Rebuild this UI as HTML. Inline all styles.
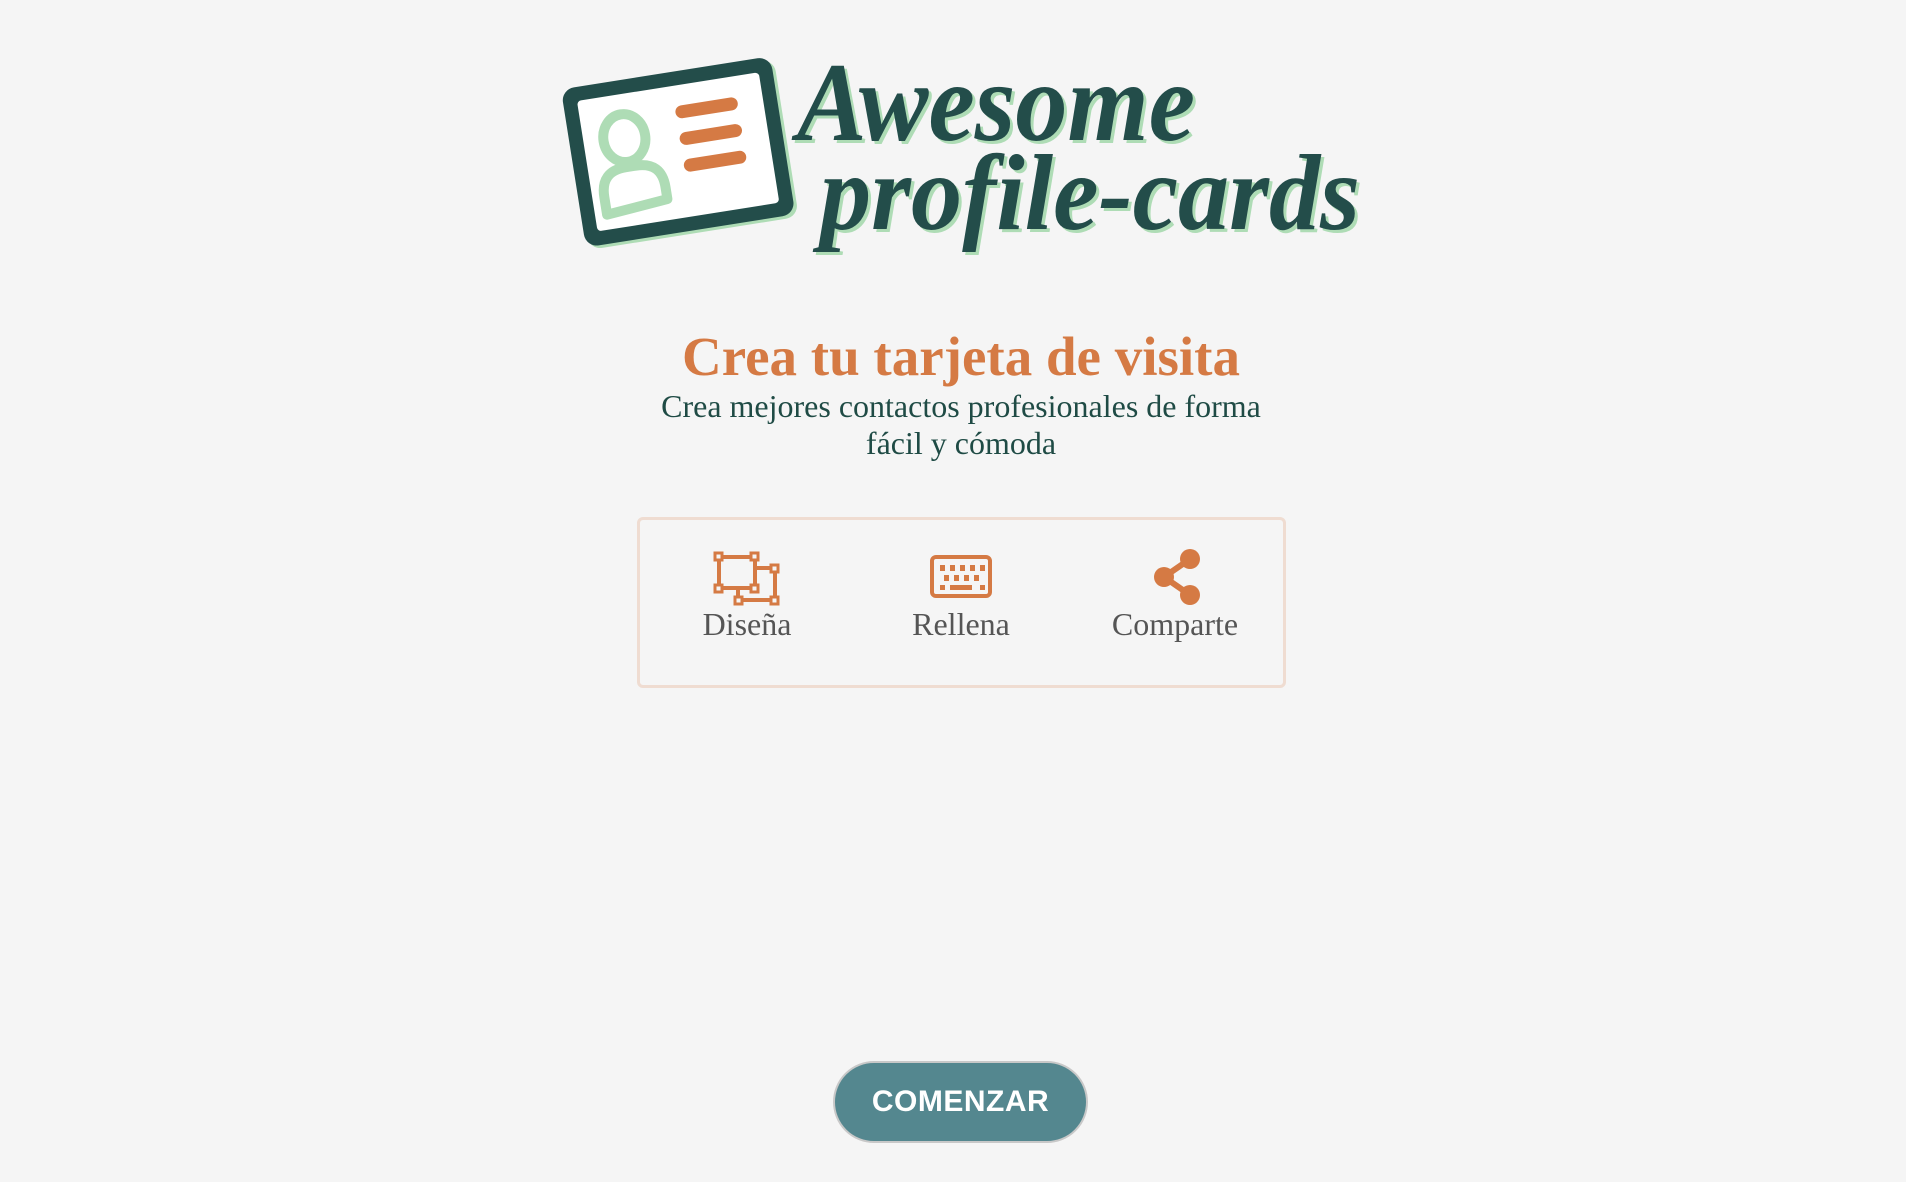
<!DOCTYPE html>
<html><head><meta charset="utf-8"><style>
html,body{margin:0;padding:0;}
body{width:1906px;height:1182px;background:#f5f5f5;position:relative;overflow:hidden;font-family:"Liberation Serif",serif;}
.abs{position:absolute;}
h1{position:absolute;left:8px;width:1906px;top:325px;margin:0;text-align:center;font:bold 55px "Liberation Serif",serif;color:#d57a44;}
.sub{position:absolute;left:8px;width:1906px;top:388px;text-align:center;font-size:32px;line-height:37px;color:#1f4b45;}
.box{position:absolute;left:637px;top:517px;width:643px;height:165px;border:3px solid #efdcd1;border-radius:6px;}
.lab{position:absolute;top:606px;width:200px;text-align:center;font-size:32px;color:#555;}
.btn{position:absolute;left:833px;top:1061px;width:251px;height:78px;border:2px solid #c8c8c8;border-radius:42px;background:#54878f;color:#fff;font:bold 30px "Liberation Sans",sans-serif;text-align:center;line-height:78px;letter-spacing:0.5px;}
</style></head><body>
<svg class="abs" style="left:0;top:0" width="1906" height="300">
  <g transform="rotate(-9 677 151)">
    <rect x="572" y="72" width="212" height="160" rx="13" fill="#aedcb5" transform="translate(3,3)"/>
    <rect x="572" y="72" width="212" height="160" rx="13" fill="#234d4a"/>
    <rect x="586" y="86" width="184" height="132" rx="4" fill="#fff"/>
    <ellipse cx="627" cy="130" rx="21" ry="24" fill="none" stroke="#aedcb5" stroke-width="10"/>
    <path d="M598 203 v-18 q0 -26 26 -26 h10 q26 0 26 26 v12 z" fill="none" stroke="#aedcb5" stroke-width="10" stroke-linejoin="round"/>
    <g stroke="#d57a44" stroke-width="13" stroke-linecap="round">
      <line x1="688" y1="113" x2="738" y2="113"/>
      <line x1="688" y1="140" x2="738" y2="140"/>
      <line x1="688" y1="167" x2="738" y2="167"/>
    </g>
  </g>
  <g font-family="Liberation Serif" font-weight="bold" font-style="italic">
    <text x="800" y="143" font-size="112" textLength="398" lengthAdjust="spacingAndGlyphs" fill="#aedcb5">Awesome</text>
    <text x="797" y="140" font-size="112" textLength="398" lengthAdjust="spacingAndGlyphs" fill="#234d4a">Awesome</text>
    <text x="823" y="232" font-size="108" textLength="540" lengthAdjust="spacingAndGlyphs" fill="#aedcb5">profile-cards</text>
    <text x="820" y="229" font-size="108" textLength="540" lengthAdjust="spacingAndGlyphs" fill="#234d4a">profile-cards</text>
  </g>
</svg>
<h1>Crea tu tarjeta de visita</h1>
<div class="sub">Crea mejores contactos profesionales de forma<br>fácil y cómoda</div>
<div class="box"></div>
<svg class="abs" style="left:700px;top:545px" width="560" height="70">
  <g fill="none" stroke="#d57a44" stroke-width="4">
    <rect x="19" y="12" width="36" height="31"/>
    <polyline points="55,23 75,23 75,55 38,55 38,43"/>
    <g fill="#f5f5f5" stroke-width="3">
      <rect x="15" y="8" width="7" height="7"/><rect x="51" y="8" width="7" height="7"/>
      <rect x="15" y="40" width="7" height="7"/><rect x="51" y="40" width="7" height="7"/>
      <rect x="71" y="20" width="7" height="7"/><rect x="71" y="52" width="7" height="7"/>
      <rect x="35" y="52" width="7" height="7"/>
    </g>
    <rect x="232" y="12" width="58" height="39" rx="4"/>
  </g>
  <g fill="#d57a44">
    <rect x="240" y="20" width="5" height="6"/><rect x="250" y="20" width="5" height="6"/><rect x="260" y="20" width="5" height="6"/><rect x="270" y="20" width="5" height="6"/><rect x="280" y="20" width="5" height="6"/>
    <rect x="244" y="30" width="5" height="6"/><rect x="254" y="30" width="5" height="6"/><rect x="264" y="30" width="5" height="6"/><rect x="274" y="30" width="5" height="6"/>
    <rect x="240" y="40" width="5" height="5"/><rect x="250" y="40" width="22" height="5"/><rect x="280" y="40" width="5" height="5"/>
    <circle cx="490" cy="14" r="10"/><circle cx="464" cy="32" r="10"/><circle cx="490" cy="50" r="10"/>
  </g>
  <g stroke="#d57a44" stroke-width="6"><line x1="490" y1="14" x2="464" y2="32"/><line x1="464" y1="32" x2="490" y2="50"/></g>
</svg>
<div class="lab" style="left:647px">Diseña</div>
<div class="lab" style="left:861px">Rellena</div>
<div class="lab" style="left:1075px">Comparte</div>
<div class="btn">COMENZAR</div>
</body></html>
